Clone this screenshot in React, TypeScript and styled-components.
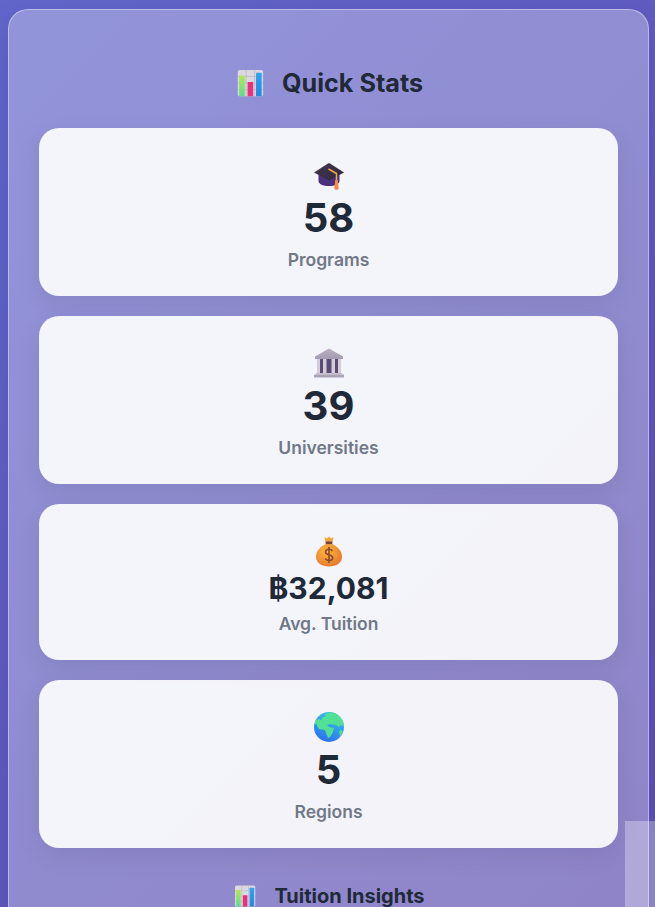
import React from 'react';
import styled, { createGlobalStyle } from 'styled-components';

const GlobalStyle = createGlobalStyle`
  html, body {
    margin: 0;
    height: 907px;
    overflow: hidden;
  }
  body {
    font-family: Inter, "Liberation Sans", sans-serif;
    background: linear-gradient(135deg, #6367cb 0%, #5f4fb0 100%);
    background-attachment: fixed;
  }
`;

const Page = styled.div`
  padding: 9px 6px 0 8px;
`;

const Panel = styled.section`
  padding: 54px 30px 30px;
  background: rgba(255, 255, 255, 0.3);
  border: 1px solid rgba(255, 255, 255, 0.4);
  border-radius: 20px;
  box-shadow: 0 8px 32px rgba(31, 38, 135, 0.2);
`;

const SectionTitle = styled.h2<{ $small?: boolean }>`
  display: flex;
  align-items: center;
  justify-content: center;
  gap: 18px;
  margin: 0 0 ${(p) => (p.$small ? '20px' : '26px')};
  height: ${(p) => (p.$small ? '26px' : '38px')};
  font-size: ${(p) => (p.$small ? '20px' : '25.2px')};
  font-weight: 700;
  line-height: 1.2;
  color: #1f2937;
`;

const StatList = styled.div`
  display: flex;
  flex-direction: column;
  gap: 20px;
  margin-bottom: 35px;
`;

const StatCard = styled.article`
  display: flex;
  flex-direction: column;
  align-items: center;
  padding: 32px 24px 24px;
  background: rgba(255, 255, 255, 0.9);
  border-radius: 20px;
  box-shadow: 0 8px 25px rgba(0, 0, 0, 0.08);
`;

const IconSlot = styled.div`
  width: 32px;
  height: 34px;
  display: flex;
  svg {
    display: block;
  }
`;

const StatValue = styled.div<{ $compact?: boolean }>`
  font-size: ${(p) => (p.$compact ? '30px' : '40px')};
  line-height: 1.2;
  font-weight: 700;
  color: #1f2937;
  margin-bottom: 6px;
  white-space: nowrap;
`;

const StatLabel = styled.div`
  font-size: 17.5px;
  line-height: 24px;
  font-weight: 600;
  color: #717887;
`;

const ScrollGhost = styled.div`
  position: fixed;
  right: 0;
  bottom: 0;
  width: 30px;
  height: 86px;
  background: rgba(255, 255, 255, 0.3);
`;

const ChartIcon = ({ size = 30 }: { size?: number }) => (
  <svg width={size} height={size} viewBox="-1 0 32 32">
    <defs>
      <linearGradient id="chartGreen" x1="0" y1="0" x2="0" y2="1">
        <stop offset="0" stopColor="#b0ea50" />
        <stop offset="1" stopColor="#5edc8c" />
      </linearGradient>
      <linearGradient id="chartBlue" x1="0" y1="0" x2="0" y2="1">
        <stop offset="0" stopColor="#2ea6ee" />
        <stop offset="1" stopColor="#2486e2" />
      </linearGradient>
    </defs>
    <rect x="3" y="2" width="27" height="28" rx="2" fill="#dcd8e2" />
    <path d="M3 9h27M3 16h27M3 23h27M12 2v28M21 2v28" stroke="#b8b3c2" strokeWidth="0.7" />
    <rect x="4.500" y="8" width="6" height="22" rx="0.6" fill="url(#chartGreen)" />
    <rect x="13.500" y="15" width="6" height="15" rx="0.6" fill="#ec2f7c" />
    <rect x="22.500" y="5" width="6" height="25" rx="0.6" fill="url(#chartBlue)" />
  </svg>
);

const CapIcon = () => (
  <svg width="32" height="32" viewBox="0 0 32 32">
    <defs>
      <linearGradient id="capTop" x1="0" y1="0" x2="1" y2="1">
        <stop offset="0" stopColor="#43384f" />
        <stop offset="1" stopColor="#2f2740" />
      </linearGradient>
    </defs>
    <path d="M5.500 12v9c0 3 4.500 5 10.500 5s10.500-2 10.500-5v-9z" fill="#49307f" />
    <path d="M1 12.500 15 3.600c.7-.4 1.400-.4 2 0l14 8.900-14 7.600c-.7.400-1.400.400-2 0z" fill="url(#capTop)" />
    <path d="M15.500 9 23.500 13.500v7" fill="none" stroke="#f0ac3c" strokeWidth="1.500" />
    <path d="M22.200 20h2.600l.9 8.200c0 2-4.400 2-4.400 0z" fill="#f4894a" />
  </svg>
);

const BankIcon = () => (
  <svg width="32" height="32" viewBox="0 0 32 32">
    <defs>
      <linearGradient id="bankStone" x1="0" y1="0" x2="0" y2="1">
        <stop offset="0" stopColor="#b8b0c0" />
        <stop offset="1" stopColor="#a59bb1" />
      </linearGradient>
    </defs>
    <path d="M16 0.500 2 8.500V11h28V8.500z" fill="url(#bankStone)" />
    <rect x="4" y="11" width="24" height="14" fill="#5a4c72" />
    <rect x="4" y="11" width="3" height="14" fill="#d2cdd8" />
    <rect x="10" y="11" width="3.500" height="14" fill="#d2cdd8" />
    <rect x="18.500" y="11" width="3.500" height="14" fill="#d2cdd8" />
    <rect x="25" y="11" width="3" height="14" fill="#d2cdd8" />
    <rect x="3" y="25" width="26" height="1.500" fill="#c4bdcc" />
    <rect x="1" y="26.500" width="30" height="3" rx="0.5" fill="#aaa2b5" />
  </svg>
);

const BagIcon = () => (
  <svg width="32" height="32" viewBox="0 -1 32 32">
    <defs>
      <radialGradient id="bagFill" cx="0.4" cy="0.35" r="0.8">
        <stop offset="0" stopColor="#fdb63c" />
        <stop offset="1" stopColor="#e2702e" />
      </radialGradient>
    </defs>
    <path d="M11.500 0 14 1.500 16 -0.500 18 1.500 20.500 0 19.500 5h-7z" fill="#f9a23a" />
    <rect x="12.500" y="4.500" width="7" height="2.500" rx="1" fill="#7a4230" />
    <path d="M13 7C7.500 9.500 3 14 3 19.500c0 6.500 5.500 10 13 10s13-3.500 13-10C29 14 24.500 9.500 19 7z" fill="url(#bagFill)" />
    <path d="M19.500 14c-.8-1.200-2-1.700-3.500-1.700-2 0-3.500 1-3.500 2.700 0 3.700 7.200 2 7.200 5.800 0 1.700-1.600 2.700-3.700 2.700-1.600 0-3-.7-3.800-2M16 10v16" fill="none" stroke="#8a4a34" strokeWidth="1.600" />
  </svg>
);

const GlobeIcon = () => (
  <svg width="32" height="32" viewBox="0 0 32 32">
    <defs>
      <linearGradient id="globeSea" x1="0.7" y1="0" x2="0.3" y2="1">
        <stop offset="0" stopColor="#38c4ea" />
        <stop offset="1" stopColor="#2b6ff0" />
      </linearGradient>
      <clipPath id="globeClip">
        <circle cx="16" cy="15" r="15" />
      </clipPath>
    </defs>
    <circle cx="16" cy="15" r="15" fill="url(#globeSea)" />
    <g clipPath="url(#globeClip)" fill="#52e095">
      <path d="M13 2 18 0l13 3v11l-3-1-2 2-3-2-6-1-3 1 2 2 5 1-1 4-3 5-2 1-2-5-1-3-6-1-2-3 1-4 4-3 1-2 3-1-1-2-4 1z" />
      <path d="M2 8 7 7l1 2-3 4-3-1z" />
      <path d="M26 19l3-1 1 3-3 3z" />
    </g>
  </svg>
);

const stats = [
  { id: 'programs', icon: <CapIcon />, value: '58', label: 'Programs' },
  { id: 'universities', icon: <BankIcon />, value: '39', label: 'Universities' },
  { id: 'tuition', icon: <BagIcon />, value: '฿32,081', label: 'Avg. Tuition', compact: true },
  { id: 'regions', icon: <GlobeIcon />, value: '5', label: 'Regions' },
];

export default function App() {
  return (
    <>
      <GlobalStyle />
      <Page>
        <Panel>
          <SectionTitle>
            <ChartIcon />
            Quick Stats
          </SectionTitle>
          <StatList>
            {stats.map((stat) => (
              <StatCard key={stat.id}>
                <IconSlot>{stat.icon}</IconSlot>
                <StatValue $compact={stat.compact}>{stat.value}</StatValue>
                <StatLabel>{stat.label}</StatLabel>
              </StatCard>
            ))}
          </StatList>
          <SectionTitle $small>
            <ChartIcon size={24} />
            Tuition Insights
          </SectionTitle>
        </Panel>
      </Page>
      <ScrollGhost />
    </>
  );
}
